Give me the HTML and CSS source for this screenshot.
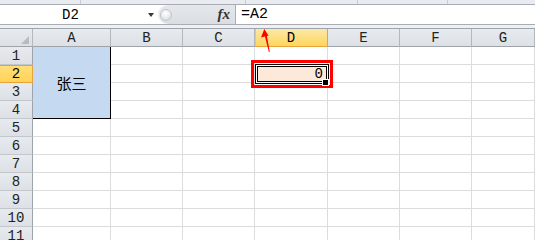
FILE: index.html
```html
<!DOCTYPE html>
<html>
<head>
<meta charset="utf-8">
<link rel="stylesheet" href="styles.css">
</head>
<body>
<div class="app">
  <div class="edge"><span class="seg s1"></span><span class="seg s2"></span><span class="seg s3"></span><span class="seg s4"></span></div>
  <div class="fbar">
    <div class="namebox">D2</div>
    <div class="dd"><span class="tri"></span></div>
    <div class="fxbox"><span class="knob"></span><span class="fx">fx</span></div>
    <div class="formula">=A2</div>
  </div>
  <div class="gap"></div>
  <div class="sheet">
    <div class="h corner"><span class="ctri"></span></div>
    <div class="h">A</div><div class="h">B</div><div class="h">C</div><div class="h sel">D</div><div class="h">E</div><div class="h">F</div><div class="h">G</div>

    <div class="rh">1</div><div class="merged">张三</div><div class="c"></div><div class="c"></div><div class="c"></div><div class="c"></div><div class="c"></div><div class="c"></div>
    <div class="rh sel">2</div><div class="c"></div><div class="c"></div>
    <div class="c active">0
      <span class="redbox"></span><span class="selbox"></span><span class="handle"></span>
    </div>
    <div class="c"></div><div class="c"></div><div class="c"></div>
    <div class="rh">3</div><div class="c"></div><div class="c"></div><div class="c"></div><div class="c"></div><div class="c"></div><div class="c"></div>
    <div class="rh">4</div><div class="c"></div><div class="c"></div><div class="c"></div><div class="c"></div><div class="c"></div><div class="c"></div>
    <div class="rh">5</div><div class="c"></div><div class="c"></div><div class="c"></div><div class="c"></div><div class="c"></div><div class="c"></div><div class="c"></div>
    <div class="rh">6</div><div class="c"></div><div class="c"></div><div class="c"></div><div class="c"></div><div class="c"></div><div class="c"></div><div class="c"></div>
    <div class="rh">7</div><div class="c"></div><div class="c"></div><div class="c"></div><div class="c"></div><div class="c"></div><div class="c"></div><div class="c"></div>
    <div class="rh">8</div><div class="c"></div><div class="c"></div><div class="c"></div><div class="c"></div><div class="c"></div><div class="c"></div><div class="c"></div>
    <div class="rh">9</div><div class="c"></div><div class="c"></div><div class="c"></div><div class="c"></div><div class="c"></div><div class="c"></div><div class="c"></div>
    <div class="rh">10</div><div class="c"></div><div class="c"></div><div class="c"></div><div class="c"></div><div class="c"></div><div class="c"></div><div class="c"></div>
    <div class="rh">11</div><div class="c"></div><div class="c"></div><div class="c"></div><div class="c"></div><div class="c"></div><div class="c"></div><div class="c"></div>
  </div>
  <svg class="arrow" width="18" height="32" viewBox="0 0 18 32">
    <polygon points="8.3,5 12.6,11.8 10.9,12.1 13.8,27.8 12.9,27.9 8.9,12.6 5,13.4" fill="#ff0000"/>
  </svg>
</div>
</body>
</html>
```

FILE: styles.css
```css
* { box-sizing: border-box; }
html, body { margin: 0; padding: 0; }
body {
  width: 535px;
  height: 240px;
  overflow: hidden;
  background: #fff;
  font-family: "Liberation Mono", "DejaVu Sans Mono", monospace;
  color: #000;
}
.app {
  position: relative;
  width: 535px;
  height: 240px;
  overflow: hidden;
}

/* ribbon edge */
.edge {
  display: flex;
  height: 5px;
  background: #e8ebef;
  border-bottom: 1px solid #a9adb3;
}
.seg { border-right: 1px solid #c9cdd2; height: 100%; }
.s1 { width: 81px; }
.s2 { width: 165px; }
.s3 { width: 112px; }
.s4 { width: 90px; }

/* formula bar */
.fbar {
  display: flex;
  height: 20px;
  background: #fff;
  border-bottom: 1px solid #a9adb3;
}
.namebox {
  width: 141px;
  display: flex;
  align-items: center;
  justify-content: center;
  font-size: 14px;
}
.dd {
  width: 17px;
  display: flex;
  align-items: center;
  justify-content: center;
}
.tri {
  width: 0;
  height: 0;
  border-left: 3.5px solid transparent;
  border-right: 3.5px solid transparent;
  border-top: 4px solid #3a3a3a;
  margin-left: 3px;
}
.fxbox {
  width: 78px;
  display: flex;
  align-items: center;
  background: linear-gradient(#e4e7eb, #dadee3);
  border-radius: 10px 0 0 10px;
  border-right: 1px solid #a9adb3;
  box-shadow: inset 1px 0 0 #f4f5f7;
}
.knob {
  width: 12px;
  height: 12px;
  margin-left: 2px;
  border-radius: 50%;
  border: 1px solid #c2c6cb;
  background: radial-gradient(circle at 45% 35%, #ffffff 0%, #eef0f2 40%, #cdd1d6 100%);
}
.fx {
  margin-left: auto;
  margin-right: 5px;
  font-family: "Liberation Serif", serif;
  font-style: italic;
  font-weight: bold;
  font-size: 15px;
  color: #333;
}
.formula {
  flex: 1;
  display: flex;
  align-items: center;
  padding-left: 5px;
  font-size: 15px;
}
.gap {
  height: 3px;
  background: #eef0f3;
}

/* sheet */
.sheet {
  display: grid;
  grid-template-columns: 33px 78px 72px 72px 73px 72px 72px 1fr;
  grid-auto-rows: 18px;
  border-top: 1px solid #9ea4ab;
}
.h, .rh {
  display: flex;
  align-items: center;
  justify-content: center;
  font-size: 14px;
  color: #222;
  background: linear-gradient(#e7eaee, #dde1e6);
}
.h {
  border-right: 1px solid #b3b8be;
  border-bottom: 1px solid #9ea4ab;
}
.rh {
  border-right: 1px solid #9ea4ab;
  border-bottom: 1px solid #c3c7cc;
}
.corner {
  justify-content: flex-end;
  align-items: flex-end;
  padding: 0 3px 2px 0;
}
.ctri {
  width: 0;
  height: 0;
  border-left: 8px solid transparent;
  border-bottom: 8px solid #b7bcc2;
}
.h.sel {
  background: linear-gradient(#fbe9a8, #ffd55c);
  border-right-color: #e9a23b;
  border-bottom-color: #e9a23b;
  box-shadow: inset 1px 0 0 #f1c46a;
  color: #000;
}
.rh.sel {
  background: linear-gradient(#ffe07a, #ffd356);
  border-right-color: #e9a23b;
  border-bottom-color: #e9a23b;
  box-shadow: inset 0 1px 0 #e9a23b;
  color: #000;
}
.c {
  border-right: 1px solid #dadcdd;
  border-bottom: 1px solid #dadcdd;
}
.merged {
  grid-column: 2;
  grid-row: 2 / span 4;
  background: #c5d9f1;
  border-right: 1px solid #000;
  border-bottom: 1px solid #000;
  display: flex;
  align-items: center;
  justify-content: center;
  font-family: "Noto Sans CJK SC", sans-serif;
  font-size: 15px;
}
.active {
  position: relative;
  background: #fde9d9;
  display: flex;
  align-items: center;
  justify-content: flex-end;
  padding-right: 4px;
  font-size: 14px;
}
.redbox {
  position: absolute;
  left: -4px;
  top: -5px;
  width: 82px;
  height: 28px;
  border: 3px solid #ff0000;
}
.selbox {
  position: absolute;
  left: 0;
  top: -1px;
  width: 74px;
  height: 20px;
  border: 1px solid #000;
  box-shadow: inset 0 0 0 1px #fff, inset 0 0 0 2px #000;
}
.handle {
  position: absolute;
  left: 68px;
  top: 15px;
  width: 5px;
  height: 5px;
  background: #000;
  box-shadow: 0 0 0 1px #fff;
}
.arrow {
  position: absolute;
  left: 256px;
  top: 24px;
}
```
